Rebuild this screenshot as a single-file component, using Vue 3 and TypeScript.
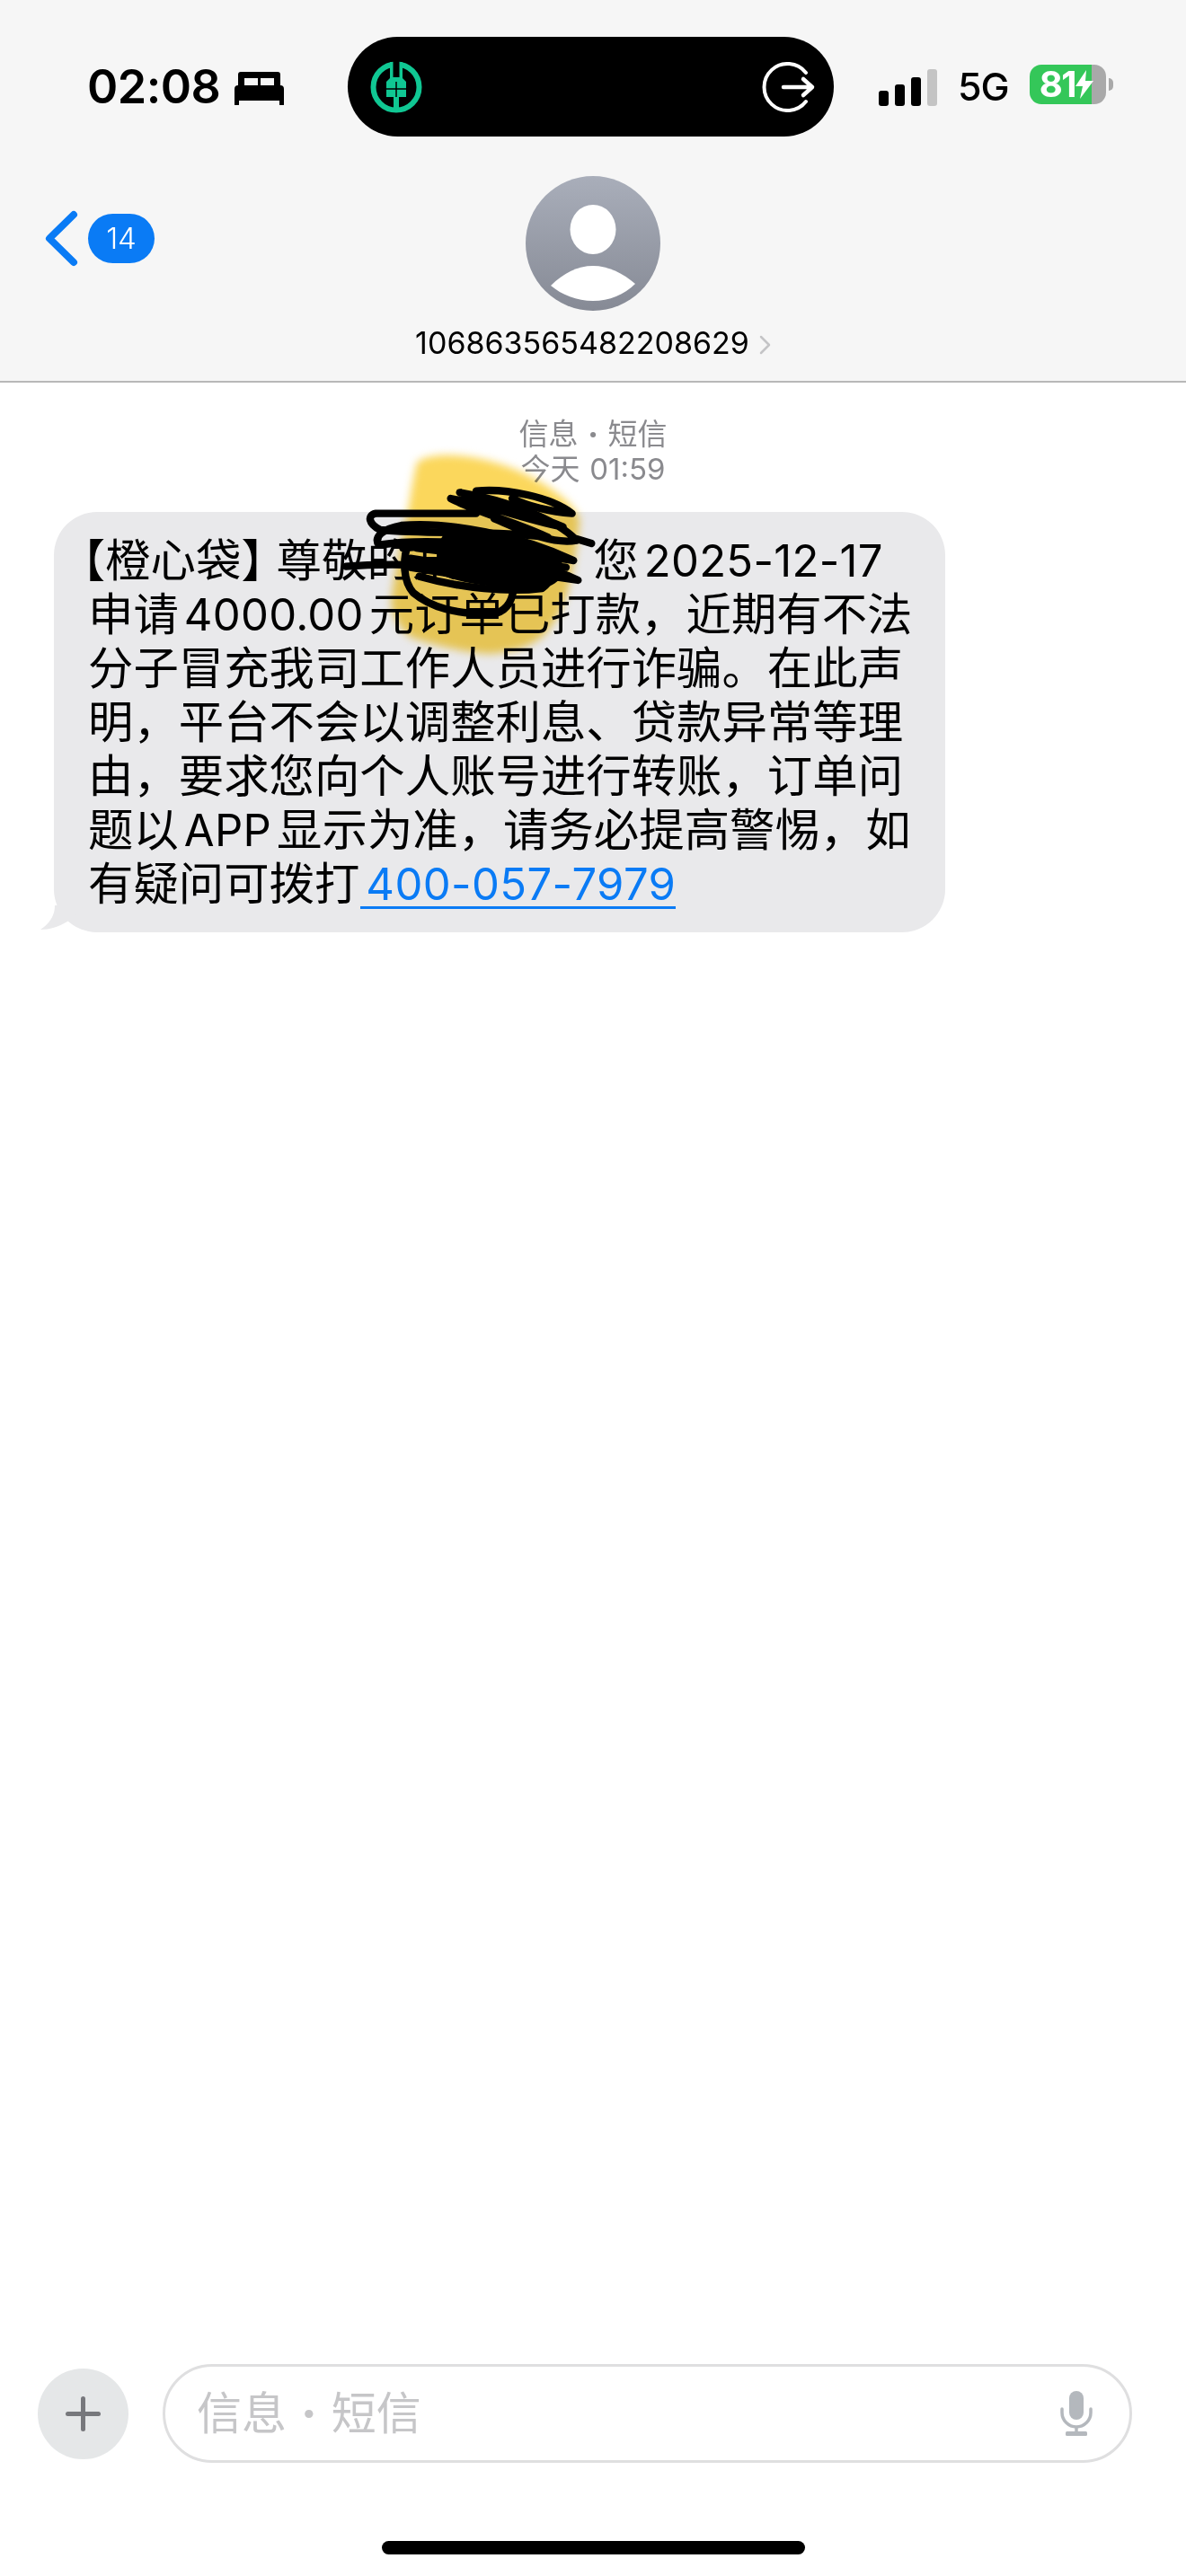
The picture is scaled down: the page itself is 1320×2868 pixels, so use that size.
<template>
  <div class="page">
    <header class="top">
      <div class="status">
        <div class="status-left">
          <span class="time">02:08</span>
          <svg class="bed" viewBox="0 0 55 37">
            <path d="M7 0h41a3 3 0 0 1 3 3v13H4V3a3 3 0 0 1 3-3z" />
            <rect x="11" y="7" width="15" height="8" fill="#f6f6f6" />
            <rect x="29" y="7" width="15" height="8" fill="#f6f6f6" />
            <path d="M4 15h47a4 4 0 0 1 4 4v17a1.5 1.5 0 0 1-5 0v-4H5v4a1.5 1.5 0 0 1-5 0V19a4 4 0 0 1 4-4z" />
          </svg>
        </div>
        <div class="island">
          <svg class="bank" viewBox="0 0 58 58">
            <circle cx="29" cy="29" r="25.5" fill="none" stroke="#10c793" stroke-width="6" />
            <path d="M22 1h14v18l4 4v17H32v13h-6V40H18V23l4-4z" fill="#10c793" />
            <rect x="25.500" y="0" width="7" height="18" fill="#000" />
            <path d="M18 31h22M29 23v17" stroke="#000" stroke-width="1.500" />
          </svg>
          <svg class="exit" viewBox="0 0 60 56">
            <path d="M49 12A26 26 0 1 0 49 44" fill="none" stroke="#fff" stroke-width="4" stroke-linecap="round" />
            <path d="M24 28h32M46 19l10 9-10 9" fill="none" stroke="#fff" stroke-width="4.500" stroke-linecap="round" stroke-linejoin="round" />
          </svg>
        </div>
        <div class="status-right">
          <div class="signal">
            <i v-for="(bar, i) in signalBars" :key="i" :class="{ off: i === 3 }" :style="{ height: bar + 'px' }"></i>
          </div>
          <span class="net">5G</span>
          <div class="battery">
            <span class="level">81</span>
            <svg class="bolt" viewBox="0 0 20 32">
              <path d="M12 0L0 18h8L5 32 20 12h-9z" fill="#fff" />
            </svg>
          </div>
          <i class="nub"></i>
        </div>
      </div>
      <div class="nav">
        <div class="back">
          <svg class="chevron" viewBox="0 0 37 63">
            <path d="M32 5L5 31.500 32 58" fill="none" stroke="#0a7bf5" stroke-width="8" stroke-linecap="round" stroke-linejoin="round" />
          </svg>
          <span class="badge">14</span>
        </div>
        <div class="contact">
          <svg class="avatar" viewBox="0 0 150 150">
            <defs>
              <linearGradient id="avatarFill" x1="0" y1="0" x2="0" y2="1">
                <stop offset="0" stop-color="#a9aeba" />
                <stop offset="1" stop-color="#868a95" />
              </linearGradient>
            </defs>
            <circle cx="75" cy="75" r="75" fill="url(#avatarFill)" />
            <ellipse cx="75" cy="59.500" rx="25.500" ry="27.500" fill="#fff" />
            <path d="M28 122C42 108 58 100 75 100S108 108 122 120C110 132 93 139 75 139S40 132 28 122z" fill="#fff" />
          </svg>
          <div class="number">
            <span>106863565482208629</span>
            <svg class="more" viewBox="0 0 13 22">
              <path d="M2 2l9 9-9 9" fill="none" stroke="#c4c4c6" stroke-width="2.500" stroke-linecap="round" stroke-linejoin="round" />
            </svg>
          </div>
        </div>
      </div>
    </header>

    <main class="thread">
      <div class="stamp">
        <div>信息 <span class="dot">·</span> 短信</div>
        <div>今天 01:59</div>
      </div>
      <div class="bubble">
        <svg class="tail" viewBox="0 0 50 30">
          <path d="M16 0C16 12 10 20 0 27C10 27 20 24 30 18L50 0z" fill="#e9e9eb" />
        </svg>
        <p class="msg"><span class="open">【</span>橙心袋<span class="close">】</span>尊敬的某用户，您<span class="latin">2025-12-17</span></p>
        <p class="msg">申请<span class="latin">4000.00</span>元订单已打款，近期有不法</p>
        <p class="msg">分子冒充我司工作人员进行诈骗。在此声</p>
        <p class="msg">明，平台不会以调整利息、贷款异常等理</p>
        <p class="msg">由，要求您向个人账号进行转账，订单问</p>
        <p class="msg">题以<span class="latin">APP</span>显示为准，请务必提高警惕，如</p>
        <p class="msg">有疑问可拨打<span class="phone">400-057-7979</span></p>
      </div>

      <!-- highlighter and pen marks someone drew on the screenshot -->
      <svg class="marker" viewBox="0 0 960 750">
        <path d="M333 51C270 56 250 70 249 87C240 130 232 170 228 204C205 320 175 450 165 549C175 600 200 630 228 657C320 690 420 710 501 714C570 708 630 690 669 657C710 620 740 560 753 513C775 430 790 340 795 264C775 220 745 195 711 171C600 90 450 45 333 51z" />
      </svg>
      <svg class="scribble" viewBox="0 0 960 750">
        <g fill="none" stroke="#000" stroke-width="25" stroke-linecap="round" stroke-linejoin="round">
          <path d="M15 422C200 405 520 425 790 468C650 400 350 340 205 360C400 345 640 385 775 402C600 320 360 270 200 285C140 295 105 325 125 350C300 325 560 350 720 390" />
          <path d="M450 245H115C85 250 90 280 130 300C300 315 500 300 690 325C600 280 450 240 365 195C500 220 650 275 740 290C600 230 480 200 395 175C550 200 720 265 785 335C700 350 600 300 510 262" />
          <path d="M450 170C550 160 700 190 770 245C700 240 620 220 570 195M785 330L835 345" />
          <path d="M222 345C205 400 205 470 240 510C300 560 380 580 500 582C550 575 570 540 575 495" />
          <path d="M260 455C400 495 560 510 670 495C700 475 705 445 695 415" />
          <path d="M230 395C400 425 600 440 760 455M250 360C420 380 600 410 750 425M230 425C400 455 560 470 680 470" />
        </g>
        <path d="M345 310C470 280 610 310 720 385C755 420 745 470 690 490C560 500 420 485 330 450C310 400 315 350 345 310z" fill="#000" />
      </svg>
    </main>

    <footer class="bottom">
      <div class="composer">
        <div class="plus"><i></i><i></i></div>
        <div class="field">
          <span class="hint">信息 <span class="dot">·</span> 短信</span>
          <svg class="mic" viewBox="0 0 36 50">
            <rect x="10" y="0" width="16" height="32" rx="8" fill="#b4b8bd" />
            <path d="M2 20v4a16 16 0 0 0 32 0v-4" fill="none" stroke="#b4b8bd" stroke-width="3.500" stroke-linecap="round" />
            <path d="M18 40v6" stroke="#b4b8bd" stroke-width="3.500" />
            <rect x="6" y="45" width="24" height="5" rx="1.500" fill="#b4b8bd" />
          </svg>
        </div>
      </div>
      <div class="home"></div>
    </footer>
  </div>
</template>

<script setup lang="ts">
const signalBars: number[] = [17, 24, 32, 41];
</script>

<style>
body {
  background: #fff;
}
</style>

<style scoped>
.page {
  position: relative;
  width: 1320px;
  height: 2868px;
  display: flex;
  flex-direction: column;
  overflow: hidden;
  background: #fff;
  font-family: Inter, "Noto Sans CJK SC", sans-serif;
  color: #000;
}
.top {
  height: 426px;
  box-sizing: border-box;
  background: #f6f6f6;
  border-bottom: 2px solid #b8b8b8;
}
.status {
  display: flex;
  height: 152px;
  box-sizing: border-box;
  padding-top: 41px;
}
.status-left {
  width: 387px;
  box-sizing: border-box;
  padding: 24px 0 0 97px;
  display: flex;
  align-items: flex-start;
  gap: 16px;
}
.time {
  font-size: 52px;
  font-weight: 600;
  line-height: 64px;
  letter-spacing: -0.5px;
}
.bed {
  width: 55px;
  height: 37px;
  margin-top: 15px;
}
.island {
  width: 541px;
  height: 111px;
  border-radius: 56px;
  background: #000;
  display: flex;
  align-items: center;
  justify-content: space-between;
  box-sizing: border-box;
  padding: 0 20px 0 25px;
}
.bank {
  width: 58px;
  height: 58px;
}
.exit {
  width: 60px;
  height: 56px;
}
.status-right {
  flex: 1;
  display: flex;
  align-items: center;
  padding: 0 0 15px 50px;
  box-sizing: border-box;
}
.signal {
  display: flex;
  align-items: flex-end;
  gap: 7px;
  height: 41px;
  margin-top: 16px;
}
.signal i {
  width: 11px;
  border-radius: 3px;
  background: #000;
}
.signal i.off {
  background: #c4c4c4;
}
.net {
  margin-left: 23px;
  font-size: 43px;
  font-weight: 500;
  line-height: 50px;
  margin-top: 14px;
  letter-spacing: -1px;
}
.battery {
  width: 85px;
  height: 44px;
  margin-left: 23px;
  margin-top: 10px;
  border-radius: 13px;
  background: linear-gradient(90deg, #34c759 69px, #a9a9a9 69px);
  display: flex;
  align-items: center;
  box-sizing: border-box;
  padding-left: 11px;
  color: #fff;
}
.level {
  font-size: 40px;
  font-weight: 700;
  line-height: 44px;
  letter-spacing: -1.500px;
}
.bolt {
  width: 20px;
  height: 32px;
}
.nub {
  width: 5px;
  height: 14px;
  margin: 10px 0 0 3px;
  border-radius: 0 7px 7px 0;
  background: #a9a9a9;
}
.nav {
  position: relative;
  padding-top: 44px;
  display: flex;
  justify-content: center;
}
.back {
  position: absolute;
  left: 50px;
  top: 82px;
  display: flex;
  align-items: center;
  gap: 11px;
}
.chevron {
  width: 37px;
  height: 63px;
}
.badge {
  width: 74px;
  height: 55px;
  border-radius: 28px;
  background: #0a7bf5;
  color: #fff;
  font-size: 33px;
  font-weight: 300;
  line-height: 55px;
  text-align: center;
}
.contact {
  display: flex;
  flex-direction: column;
  align-items: center;
}
.avatar {
  width: 150px;
  height: 150px;
}
.number {
  margin-top: 15px;
  display: flex;
  align-items: center;
  gap: 11px;
  font-size: 34px;
  line-height: 42px;
}
.more {
  width: 13px;
  height: 22px;
  margin-top: 3px;
}
.thread {
  flex: 1;
  position: relative;
}
.stamp {
  padding-top: 38px;
  text-align: center;
  font-size: 33px;
  line-height: 39px;
  color: #8a8a8e;
  word-spacing: 1.500px;
}
.dot {
  font-weight: 800;
}
.bubble {
  position: relative;
  width: 992px;
  box-sizing: border-box;
  margin: 28px 0 0 60px;
  padding: 24px 0 24px 38px;
  border-radius: 48px;
  background: #e9e9eb;
}
.tail {
  position: absolute;
  left: -15px;
  bottom: 0;
  width: 50px;
  height: 30px;
}
.msg {
  margin: 0;
  font-size: 50.4px;
  line-height: 60px;
  height: 60px;
  white-space: nowrap;
}
.open,
.close {
  font-feature-settings: "halt";
}
.open {
  margin-left: -6px;
}
.close {
  margin-right: 14px;
}
.latin {
  margin: 0 6px;
  font-size: 49px;
  letter-spacing: 0.300px;
}
.phone {
  display: inline-block;
  margin-left: 1px;
  padding-left: 6px;
  font-size: 49px;
  line-height: 48px;
  letter-spacing: 0.400px;
  color: #0a7bf5;
  border-bottom: 3px solid #0a7bf5;
}
.marker,
.scribble {
  position: absolute;
  left: 380px;
  top: 64px;
  width: 320px;
  height: 250px;
}
.marker {
  mix-blend-mode: multiply;
}
.marker path {
  fill: #fbd75c;
  filter: blur(14px);
}
.bottom {
  padding-bottom: 24px;
}
.composer {
  display: flex;
  align-items: center;
  gap: 38px;
  padding: 0 60px 0 42px;
}
.plus {
  position: relative;
  width: 101px;
  height: 101px;
  border-radius: 50%;
  background: #e5e7e8;
  flex: none;
}
.plus i {
  position: absolute;
  left: 31px;
  top: 48px;
  width: 39px;
  height: 5px;
  border-radius: 3px;
  background: #77787c;
}
.plus i + i {
  transform: rotate(90deg);
}
.field {
  flex: 1;
  height: 110px;
  box-sizing: border-box;
  border: 3px solid #dfdfe0;
  border-radius: 55px;
  display: flex;
  align-items: center;
  justify-content: space-between;
  padding: 0 41px 0 35px;
}
.hint {
  font-size: 50px;
  line-height: 60px;
  color: #c6c6c8;
  word-spacing: 2px;
}
.mic {
  width: 36px;
  height: 50px;
}
.home {
  width: 471px;
  height: 15px;
  margin: 87px auto 0;
  border-radius: 8px;
  background: #000;
}
</style>
